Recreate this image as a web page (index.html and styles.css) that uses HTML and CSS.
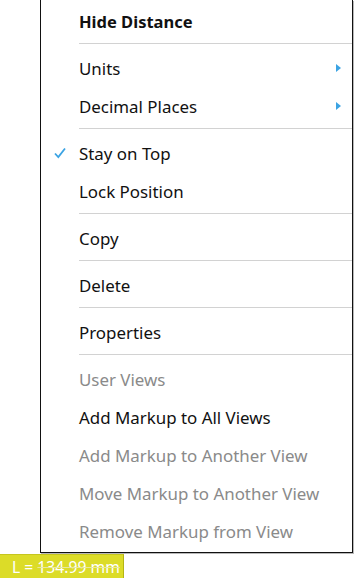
FILE: index.html
```html
<!DOCTYPE html>
<html lang="en">
<head>
    <meta charset="UTF-8">
    <title>Measurement context menu</title>
    <link rel="stylesheet" href="styles.css">
</head>
<body>
    <div class="menu">
        <div class="item bold">Hide Distance</div>
        <div class="sep"></div>
        <div class="item">Units <span class="arrow"></span></div>
        <div class="item">Decimal Places <span class="arrow"></span></div>
        <div class="sep"></div>
        <div class="item">
            <svg class="check" width="12" height="12" viewBox="0 0 12 12">
                <path d="M1 6.5 L4.3 10 L11 1.5" fill="none" stroke="#3ba3e3" stroke-width="1.8"/>
            </svg>
            Stay on Top
        </div>
        <div class="item">Lock Position</div>
        <div class="sep"></div>
        <div class="item">Copy</div>
        <div class="sep"></div>
        <div class="item">Delete</div>
        <div class="sep"></div>
        <div class="item">Properties</div>
        <div class="sep"></div>
        <div class="item disabled">User Views</div>
        <div class="item">Add Markup to All Views</div>
        <div class="item disabled">Add Markup to Another View</div>
        <div class="item disabled">Move Markup to Another View</div>
        <div class="item disabled">Remove Markup from View</div>
    </div>

    <!-- measurement label under the menu -->
    <div class="label">L = <span class="struck">134.99 mm</span></div>
</body>
</html>
```

FILE: styles.css
```css
body {
    margin: 0;
    background: #fff;
    font-family: "Noto Sans", "Open Sans", sans-serif;
    overflow: hidden;
}
.menu {
    margin-top: 0;
    margin-left: 40px;
    width: 311px;
    border: 1px solid #111;
    border-top: none;
    background: #fff;
    padding: 2px 0;
    box-shadow: 1px 1px 0 #b8b8b8;
}
.item {
    position: relative;
    display: flex;
    align-items: center;
    height: 38px;
    padding-left: 38px;
    font-size: 16.9px;
    color: #111;
    white-space: nowrap;
}
.item.bold {
    font-weight: bold;
    font-size: 16.5px;
}
.item.disabled {
    color: #8a8a8a;
}
.sep {
    height: 1px;
    margin: 3px 0 5px 38px;
    background: #d2d2d2;
}
.arrow {
    position: absolute;
    right: 11px;
    top: 15px;
    width: 0;
    height: 0;
    border-top: 4px solid transparent;
    border-bottom: 4px solid transparent;
    border-left: 5px solid #3ba3e3;
}
.check {
    position: absolute;
    left: 13px;
    top: 13px;
}
.label {
    display: inline-block;
    margin-top: 1px;
    padding: 2px 3px 3px 12px;
    line-height: 20px;
    background: #dcdc28;
    border-top: 1px solid #c6c61e;
    border-right: 1px solid #b4b414;
    color: #fff;
    font-family: "Noto Sans", "Open Sans", sans-serif;
    font-size: 15.7px;
}
.struck {
    text-decoration: line-through;
    text-decoration-color: #e8e8a0;
}
```
